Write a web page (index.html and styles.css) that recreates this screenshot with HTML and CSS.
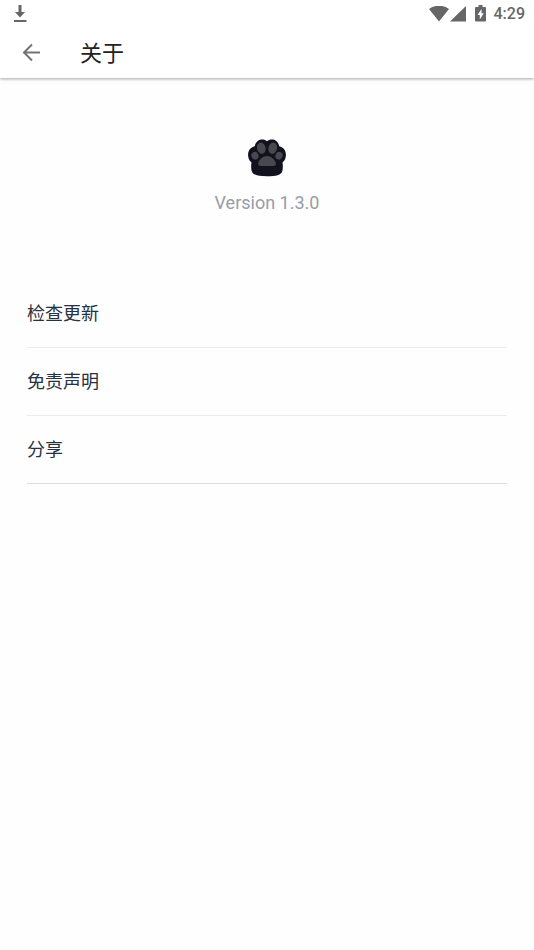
FILE: index.html
```html
<!DOCTYPE html>
<html lang="zh-CN">
<head>
<meta charset="utf-8">
<meta name="viewport" content="width=device-width, initial-scale=1">
<title>关于</title>
<link rel="stylesheet" href="styles.css">
</head>
<body>
<header class="top">
  <div class="status">
    <svg class="download" width="14" height="18" viewBox="0 0 14 18" aria-hidden="true"><path d="M5.500 0h3v7H12l-5 5.500L2 7h3.500z"/><path d="M1 15h12.500v2H1z"/></svg>
    <div class="indicators">
      <svg width="20" height="16" viewBox="0 0 20 16" aria-hidden="true"><path d="M0 3C6-1.400 14-1.400 20 3L10 15.500z"/></svg>
      <svg class="signal" width="16" height="16" viewBox="0 0 16 16" aria-hidden="true"><path d="M16 0v15.500H0z"/></svg>
      <svg class="battery" width="11" height="17" viewBox="0 0 11 17" aria-hidden="true"><path fill-rule="evenodd" d="M3.500 0h4v2H10q1 0 1 1v12.500q0 1-1 1H1q-1 0-1-1V3q0-1 1-1h2.500zM6.500 4L2.500 10h2.300v4.500L8.700 8.300H6.500z"/></svg>
      <time class="clock">4:29</time>
    </div>
  </div>
  <div class="toolbar">
    <button class="back" type="button" aria-label="返回">
      <svg width="20" height="20" viewBox="0 0 20 20" aria-hidden="true"><path d="M19 9.500H3M11 1.500L3 9.500l8 8"/></svg>
    </button>
    <h1 class="title">关于</h1>
  </div>
</header>
<main class="content">
  <section class="about">
    <svg class="logo" width="40" height="40" viewBox="0 0 40 40" aria-hidden="true">
      <path class="fur" d="M20 3.200C16.500.4 9.500.8 7.700 8.300C2.800 9.400.3 14 1.300 19c.5 3 2 4.400 3.200 5.500c-.5 3-.5 6 .2 8.500C5.600 37 11 38.300 20 38.300S34.400 37 35.300 33c.7-2.500.7-5.500.2-8.500c1.200-1.100 2.700-2.500 3.200-5.500c1-5-1.500-9.600-6.400-10.700C30.500.8 23.500.4 20 3.200z"/>
      <g class="pads"><ellipse cx="14.300" cy="10.200" rx="4.300" ry="5.700" transform="rotate(-15 14.300 10.200)"/><ellipse cx="25.700" cy="10.200" rx="4.300" ry="5.700" transform="rotate(15 25.700 10.200)"/><ellipse cx="8" cy="17.800" rx="3.500" ry="3.900" transform="rotate(-25 8 17.800)"/><ellipse cx="32" cy="17.800" rx="3.500" ry="3.900" transform="rotate(25 32 17.800)"/><path d="M20 18c-4 0-7 3-8.500 6C10.200 26.500 12 28 14 28h12c2 0 3.800-1.500 2.500-4C27 21 24 18 20 18z"/></g>
    </svg>
    <p class="version">Version 1.3.0</p>
  </section>
  <nav class="menu">
    <button class="item" type="button">检查更新</button>
    <button class="item" type="button">免责声明</button>
    <button class="item" type="button">分享</button>
  </nav>
</main>
</body>
</html>
```
FILE: styles.css
```css
* {
  box-sizing: border-box;
}

body {
  margin: 0;
  background: #fefefe;
  color: #222;
  font-family: Roboto, "Noto Sans CJK SC", sans-serif;
}

button {
  border: 0;
  background: none;
  font: inherit;
  color: inherit;
  cursor: pointer;
}

.top {
  background: #fff;
  box-shadow: 0 1px 3px rgba(0, 0, 0, 0.35);
}

.status {
  display: flex;
  justify-content: space-between;
  align-items: center;
  height: 27px;
  padding: 0 9px 0 13px;
  fill: #666;
}

.indicators {
  display: flex;
  align-items: center;
}

.signal {
  margin-left: 1px;
}

.battery {
  margin: 0 8px 0 9px;
}

.clock {
  color: #666;
  font-size: 16px;
  font-weight: 500;
  line-height: 28px;
}

.toolbar {
  display: flex;
  align-items: center;
  height: 51px;
  padding: 0 21px;
}

.back {
  display: flex;
  padding: 0;
}

.back path {
  fill: none;
  stroke: #737373;
  stroke-width: 2;
}

.title {
  margin: 0 0 0 39px;
  padding-top: 2px;
  font-size: 22px;
  font-weight: 400;
  line-height: 32px;
}

.content {
  padding: 60px 27px 0;
}

.about {
  display: flex;
  flex-direction: column;
  align-items: center;
  gap: 13px;
}

.fur {
  fill: #12121e;
}

.pads {
  fill: #484850;
}

.version {
  margin: 0;
  color: #979da8;
  font-size: 18px;
  line-height: 24px;
}

.menu {
  display: flex;
  flex-direction: column;
  margin-top: 65px;
}

.item {
  height: 68px;
  padding: 0 0 3px;
  border-bottom: 1px solid #ececee;
  color: #263141;
  font-size: 18px;
  text-align: left;
}

.item:last-child {
  border-color: #dcdde0;
}
```
